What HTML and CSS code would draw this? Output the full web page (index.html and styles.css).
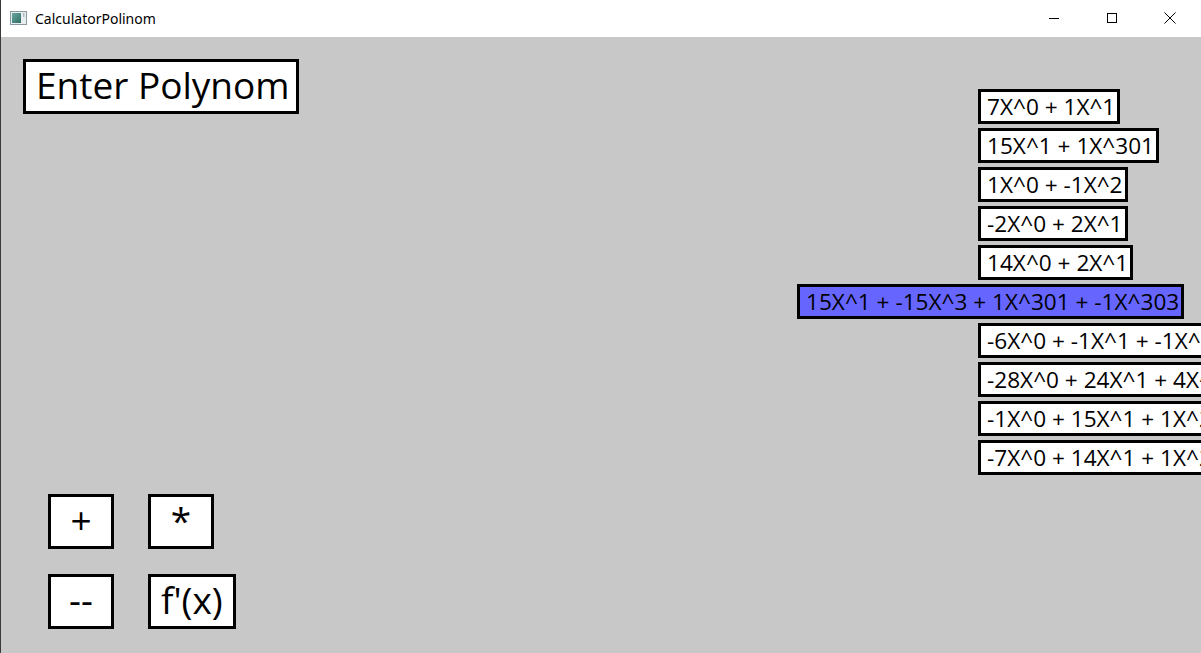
FILE: index.html
```
<!DOCTYPE html>
<html>
<head>
<meta charset="utf-8">
<title>CalculatorPolinom</title>
<link rel="stylesheet" href="styles.css">
</head>
<body>
<div class="window">
  <div class="titlebar">
    <svg class="app-icon" width="18" height="16" viewBox="0 0 18 16">
      <defs>
        <linearGradient id="g" x1="0" y1="0" x2="1" y2="1">
          <stop offset="0" stop-color="#6aa6a0"/>
          <stop offset="1" stop-color="#2f6f64"/>
        </linearGradient>
      </defs>
      <rect x="0.5" y="1.5" width="16" height="13" fill="#e8eef0" stroke="#8a9aa0"/>
      <rect x="2" y="3" width="9" height="10" fill="url(#g)"/>
      <rect x="13" y="3" width="1.5" height="4" fill="#b0bcc0"/>
    </svg>
    <span class="title">CalculatorPolinom</span>
    <div class="controls">
      <div class="ctl"><svg width="12" height="12" viewBox="0 0 12 12"><path d="M1 6.5H11" stroke="#000" stroke-width="1"/></svg></div>
      <div class="ctl"><svg width="12" height="12" viewBox="0 0 12 12"><rect x="1.5" y="1.5" width="9" height="9" fill="none" stroke="#000" stroke-width="1"/></svg></div>
      <div class="ctl"><svg width="12" height="12" viewBox="0 0 12 12"><path d="M0.5 0.5L11.5 11.5M11.5 0.5L0.5 11.5" stroke="#000" stroke-width="1"/></svg></div>
    </div>
  </div>
  <div class="content">
    <div class="left">
      <div class="enter">Enter Polynom</div>
      <div class="ops">
        <div class="btn">+</div>
        <div class="btn">*</div>
        <div class="btn">--</div>
        <div class="btn">f'(x)</div>
      </div>
    </div>
    <div class="list">
      <div class="item">7X^0 + 1X^1</div>
      <div class="item">15X^1 + 1X^301</div>
      <div class="item">1X^0 + -1X^2</div>
      <div class="item">-2X^0 + 2X^1</div>
      <div class="item">14X^0 + 2X^1</div>
      <div class="item selected">15X^1 + -15X^3 + 1X^301 + -1X^303</div>
      <div class="item">-6X^0 + -1X^1 + -1X^2 + 1X^3</div>
      <div class="item">-28X^0 + 24X^1 + 4X^2</div>
      <div class="item">-1X^0 + 15X^1 + 1X^2</div>
      <div class="item">-7X^0 + 14X^1 + 1X^2</div>
    </div>
  </div>
</div>
</body>
</html>
```
FILE: styles.css
```
html, body {
  margin: 0;
  padding: 0;
}
body {
  width: 1201px;
  height: 653px;
  overflow: hidden;
  font-family: "Open Sans", "Noto Sans", sans-serif;
  color: #000;
}
.window {
  width: 1201px;
  height: 653px;
  box-sizing: border-box;
  border-left: 1px solid #3a3a3a;
  display: flex;
  flex-direction: column;
  overflow: hidden;
}
.titlebar {
  height: 37px;
  flex: none;
  background: #fff;
  display: flex;
  align-items: center;
}
.app-icon {
  margin-left: 9px;
  margin-top: -1px;
}
.title {
  margin-left: 7px;
  font-family: "Noto Sans", sans-serif;
  font-size: 14px;
  margin-top: -1px;
}
.controls {
  margin-left: auto;
  margin-right: 2px;
  display: flex;
  height: 100%;
}
.ctl {
  width: 58px;
  height: 100%;
  display: flex;
  align-items: center;
  justify-content: center;
}
.ctl svg {
  margin-top: -1px;
}
.content {
  flex: 1;
  background: #c8c8c8;
  display: grid;
  grid-template-columns: 977px 1fr;
  min-width: 0;
  overflow: hidden;
}
.left {
  padding: 22px 0 0 22px;
  display: flex;
  flex-direction: column;
  align-items: flex-start;
}
.enter {
  box-sizing: border-box;
  width: 276px;
  height: 55px;
  border: 3px solid #000;
  background: #fff;
  font-size: 37px;
  line-height: 45px;
  padding-left: 10px;
  white-space: nowrap;
  overflow: hidden;
}
.ops {
  margin-top: 380px;
  margin-left: 25px;
  display: grid;
  grid-template-columns: 100px 100px;
  row-gap: 25px;
  justify-items: start;
}
.btn {
  box-sizing: border-box;
  height: 55px;
  min-width: 66px;
  padding: 0 10px;
  border: 3px solid #000;
  background: #fff;
  font-size: 37px;
  line-height: 45px;
  text-align: center;
}
.list {
  padding-top: 52px;
  display: flex;
  flex-direction: column;
  align-items: flex-start;
  gap: 4px;
  min-width: 0;
}
.item {
  box-sizing: border-box;
  height: 35px;
  border: 3px solid #000;
  background: #fff;
  font-size: 22.6px;
  line-height: 29px;
  padding: 0 2px 0 6px;
  white-space: nowrap;
}
.item.selected {
  background: #6666ff;
  margin-left: -181px;
}
```
